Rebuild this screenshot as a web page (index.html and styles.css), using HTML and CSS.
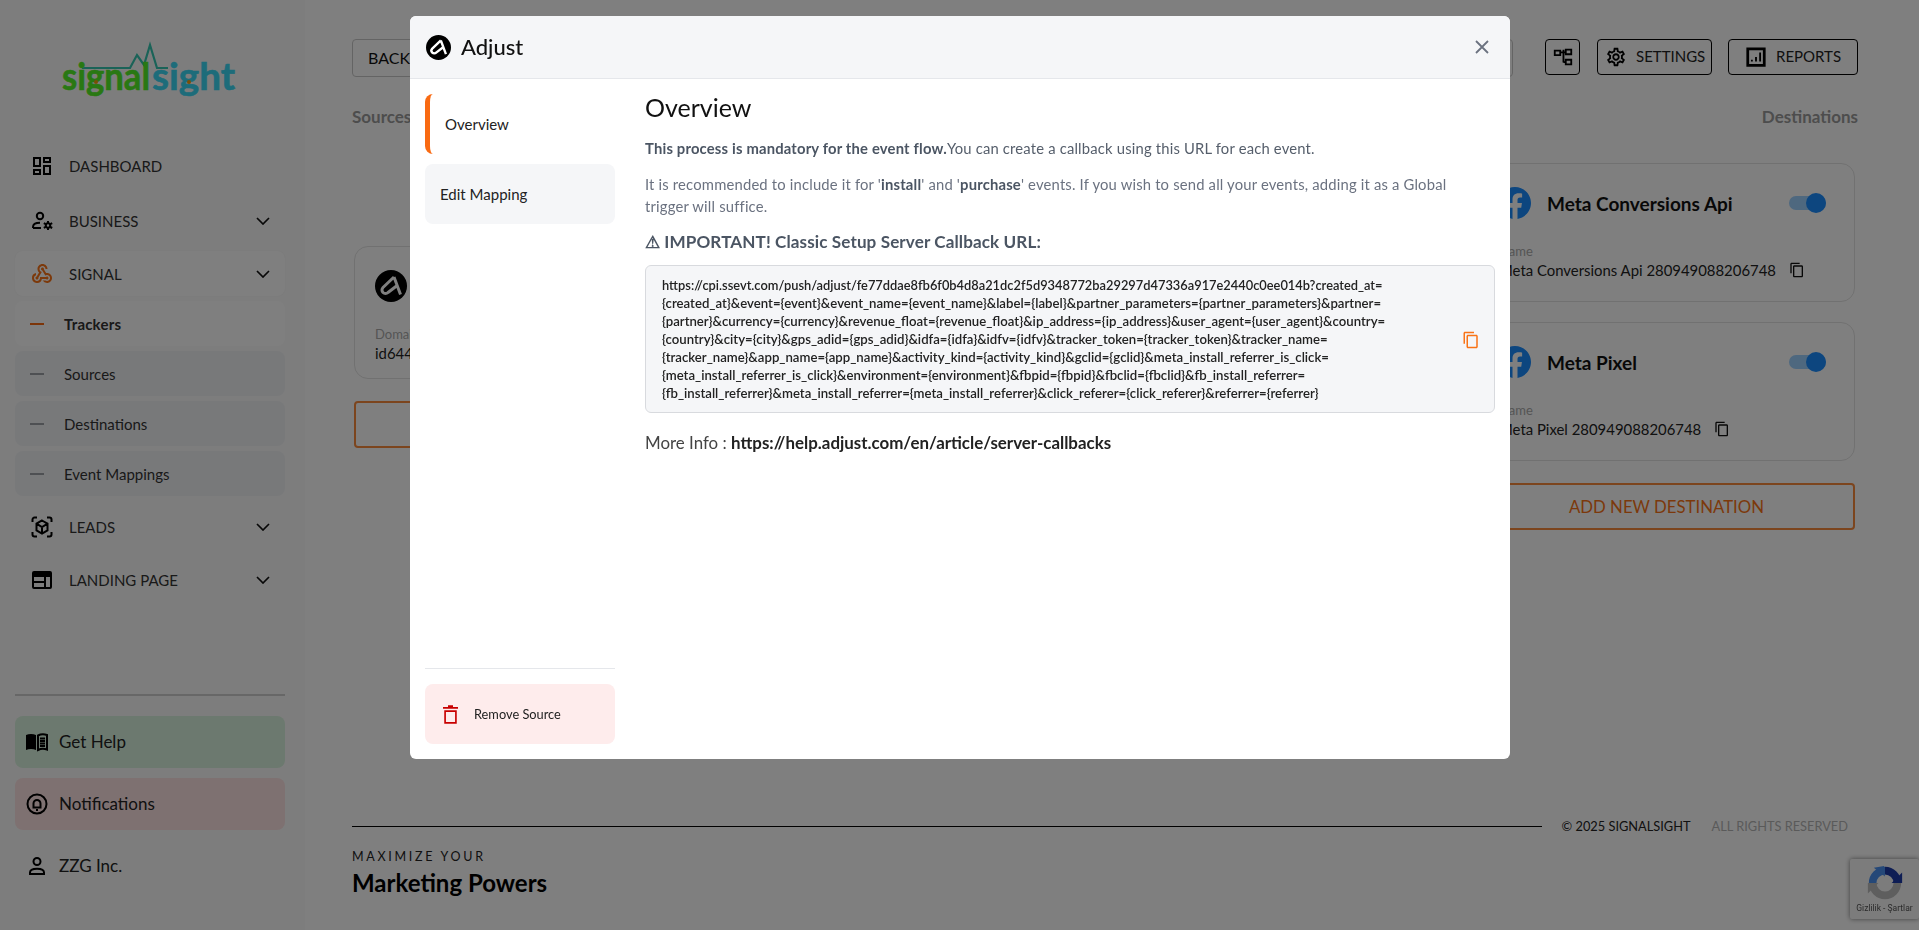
FILE: index.html
```html
<!DOCTYPE html>
<html lang="en">
<head>
<meta charset="utf-8">
<title>Adjust</title>
<link rel="stylesheet" href="styles.css">
</head>
<body>
<div class="app">
  <aside class="sidebar">
    <svg class="logo" viewBox="0 0 173 54" width="173" height="54">
      <path class="logo-pulse" d="M20 24H68L75 11L82 21L88 1L95 24H106"/>
      <text class="logo-a" x="0" y="46" textLength="88" lengthAdjust="spacingAndGlyphs">signal</text>
      <text class="logo-b" x="90" y="46" textLength="83" lengthAdjust="spacingAndGlyphs">sight</text>
      <circle class="logo-dot" cx="34" cy="38" r="2"/>
      <circle class="logo-dot" cx="127" cy="38" r="2"/>
    </svg>
    <nav class="nav">
      <a class="nav-item nav-first"><svg class="ic" viewBox="0 0 24 24"><path d="M19 5v2h-4V5h4M9 5v6H5V5h4m10 8v6h-4v-6h4M9 17v2H5v-2h4M21 3h-8v6h8V3zM11 3H3v10h8V3zm10 8h-8v10h8V11zm-10 4H3v6h8v-6z"/></svg><span>DASHBOARD</span></a>
      <a class="nav-item"><svg class="ic" viewBox="0 0 24 24"><circle class="st" cx="10" cy="7" r="3.2"/><path class="st" d="M3 19v-1c0-2.600 3-4.200 7-4.200M3 19h8"/><circle class="st" cx="18" cy="16.500" r="2.200"/><path class="st" d="M18 12v2M18 19v2M13.800 14.200l1.900 1M20.300 18l1.900 1M13.800 18.800l1.900-1M20.300 15.200l1.900-1"/></svg><span>BUSINESS</span><svg class="chev" viewBox="0 0 14 8"><path d="M1 1l6 6 6-6"/></svg></a>
      <a class="nav-item nav-active"><svg class="ic ic-orange" viewBox="0 0 24 24"><path d="M10 15h5.880c.27-.31.67-.5 1.120-.5.83 0 1.500.67 1.500 1.500s-.67 1.500-1.500 1.500c-.44 0-.84-.19-1.120-.5H11.900A5 5 0 1 1 6 11.100v2.070c-1.160.41-2 1.530-2 2.830 0 1.650 1.350 3 3 3s3-1.350 3-3v-1zm2.500-11c1.650 0 3 1.350 3 3h2c0-2.760-2.240-5-5-5s-5 2.240-5 5c0 1.430.6 2.710 1.550 3.620l-2.350 3.900c-.68.14-1.200.75-1.200 1.480 0 .83.67 1.500 1.500 1.500s1.500-.67 1.500-1.500c0-.16-.02-.31-.07-.45l3.380-5.630C10.490 9.610 9.500 8.420 9.500 7c0-1.650 1.350-3 3-3zm4.500 9c-.64 0-1.230.2-1.720.54l-3.050-5.070C11.530 8.350 11 7.740 11 7c0-.83.67-1.500 1.500-1.500S14 6.170 14 7c0 .15-.02.29-.06.43l2.190 3.650c.28-.05.57-.08.87-.08 2.760 0 5 2.240 5 5s-2.240 5-5 5a5 5 0 0 1-4.330-2.500h2.670c.48.32 1.050.5 1.660.5 1.650 0 3-1.350 3-3s-1.350-3-3-3z"/></svg><span>SIGNAL</span><svg class="chev" viewBox="0 0 14 8"><path d="M1 1l6 6 6-6"/></svg></a>
      <div class="sub-list">
        <a class="sub-item sub-active"><i class="dash"></i><span>Trackers</span></a>
        <a class="sub-item"><i class="dash"></i><span>Sources</span></a>
        <a class="sub-item"><i class="dash"></i><span>Destinations</span></a>
        <a class="sub-item"><i class="dash"></i><span>Event Mappings</span></a>
      </div>
      <a class="nav-item"><svg class="ic" viewBox="0 0 24 24"><path class="st" d="M7 2.500H4.500a2 2 0 0 0-2 2V7M17 2.500h2.500a2 2 0 0 1 2 2V7M7 21.500H4.500a2 2 0 0 1-2-2V17M17 21.500h2.500a2 2 0 0 0 2-2V17M12 5.500l5.500 3.200v6.600L12 18.500l-5.500-3.200V8.700zM6.500 8.700L12 12l5.500-3.300M12 12v6.500"/></svg><span>LEADS</span><svg class="chev" viewBox="0 0 14 8"><path d="M1 1l6 6 6-6"/></svg></a>
      <a class="nav-item"><svg class="ic" viewBox="0 0 24 24"><path fill-rule="evenodd" d="M4 3h16a2 2 0 0 1 2 2v14a2 2 0 0 1-2 2H4a2 2 0 0 1-2-2V5a2 2 0 0 1 2-2zM4 9v4h10V9zM4 15v4h10v-4zM16 9v10h4V9z"/></svg><span>LANDING PAGE</span><svg class="chev" viewBox="0 0 14 8"><path d="M1 1l6 6 6-6"/></svg></a>
    </nav>
    <div class="side-foot">
      <a class="foot-item foot-help"><svg class="fic" viewBox="0 0 24 24"><path d="M1 5c3-1.500 7-1.500 10 0v15c-3-1.500-7-1.500-10 0z"/><path class="st" d="M13 5.500c3-1.500 6-1.500 9-.5v14.500c-3-1-6-1-9 .5zM15 8.500h5M15 11h5M15 13.500h5M15 16h5"/></svg><span>Get Help</span></a>
      <a class="foot-item foot-notif"><svg class="fic" viewBox="0 0 24 24"><circle class="st" cx="12" cy="12" r="9.500"/><path class="st" d="M8.500 15.500v-4a3.500 3.500 0 0 1 7 0v4zM7.500 15.500h9M11 18h2"/></svg><span>Notifications</span></a>
      <a class="foot-item"><svg class="fic" viewBox="0 0 24 24"><circle class="st" cx="12" cy="7.500" r="3.500"/><path class="st" d="M5 20v-1.500c0-2.500 3.500-3.700 7-3.700s7 1.200 7 3.700V20z"/></svg><span>ZZG Inc.</span></a>
    </div>
  </aside>

  <main class="main">
    <div class="topbar">
      <div class="backbar">BACK</div>
      <div class="actions">
        <a class="btn btn-icon"><svg class="bic" viewBox="0 0 24 24"><path class="st" d="M3 5h6v5H3zM15 4h6v5h-6zM15 15h6v5h-6zM9 7h3.500M12.500 4v14M12.500 7H15M12.500 17.500H15"/></svg></a>
        <a class="btn btn-settings"><svg class="bic bic-lg" viewBox="0 0 24 24"><path d="M19.430 12.980c.04-.32.07-.64.07-.98 0-.34-.03-.66-.07-.98l2.110-1.650c.19-.15.24-.42.12-.64l-2-3.460c-.09-.16-.26-.25-.44-.25-.06 0-.12.01-.17.03l-2.490 1c-.52-.4-1.080-.73-1.690-.98l-.38-2.650C14.460 2.180 14.250 2 14 2h-4c-.25 0-.46.18-.49.42l-.38 2.650c-.61.25-1.170.59-1.690.98l-2.490-1c-.06-.02-.12-.03-.18-.03-.17 0-.34.09-.43.25l-2 3.460c-.13.22-.07.49.12.64l2.110 1.650c-.04.32-.07.65-.07.98 0 .33.03.66.07.98l-2.110 1.650c-.19.15-.24.42-.12.64l2 3.460c.09.16.26.25.44.25.06 0 .12-.01.17-.03l2.490-1c.52.4 1.080.73 1.690.98l.38 2.650c.03.24.24.42.49.42h4c.25 0 .46-.18.49-.42l.38-2.650c.61-.25 1.170-.59 1.690-.98l2.490 1c.06.02.12.03.18.03.17 0 .34-.09.43-.25l2-3.460c.12-.22.07-.49-.12-.64l-2.110-1.650zm-1.980-1.710c.04.31.05.52.05.73 0 .21-.02.43-.05.73l-.14 1.130.89.7 1.080.84-.7 1.210-1.270-.51-1.040-.42-.9.68c-.43.32-.84.56-1.250.73l-1.060.43-.16 1.130-.2 1.350h-1.400l-.19-1.350-.16-1.130-1.060-.43c-.43-.18-.83-.41-1.230-.71l-.91-.7-1.060.43-1.270.51-.7-1.210 1.080-.84.89-.7-.14-1.130c-.03-.31-.05-.54-.05-.74s.02-.43.05-.73l.14-1.130-.89-.7-1.080-.84.7-1.210 1.270.51 1.040.42.9-.68c.43-.32.84-.56 1.250-.73l1.060-.43.16-1.130.2-1.350h1.390l.19 1.350.16 1.130 1.060.43c.43.18.83.41 1.230.71l.91.7 1.060-.43 1.270-.51.7 1.210-1.070.85-.89.7.14 1.130zM12 8c-2.210 0-4 1.790-4 4s1.790 4 4 4 4-1.790 4-4-1.790-4-4-4zm0 6c-1.100 0-2-.9-2-2s.9-2 2-2 2 .9 2 2-.9 2-2 2z"/></svg><span>SETTINGS</span></a>
        <a class="btn btn-reports"><svg class="bic bic-lg" viewBox="0 0 24 24"><path class="st st-thick" d="M3 3h18v18H3z"/><path class="st" d="M7.500 17v-2M12 17v-5M16.500 17V7"/></svg><span>REPORTS</span></a>
      </div>
    </div>
    <div class="col-labels"><span>Sources</span><span>Destinations</span></div>
    <div class="board">
      <section class="col col-src">
        <article class="card card-src">
          <div class="card-head">
            <svg class="brand" viewBox="0 0 32 32"><circle cx="16" cy="16" r="16"/><path class="adj" d="M19 7l6.500 17.500M19 7L8 17.500a3.500 3.500 0 1 0 5 5l8.500-6.500"/></svg>
            <strong>Adjust</strong>
          </div>
          <small>Domain</small>
          <div class="val">id6448786147</div>
        </article>
        <a class="add">ADD NEW SOURCE</a>
      </section>
      <section class="col col-dst">
        <article class="card">
          <div class="card-head">
            <svg class="brand brand-fb" viewBox="0 0 24 24"><path d="M24 12.073c0-6.627-5.373-12-12-12s-12 5.373-12 12c0 5.990 4.388 10.954 10.125 11.854v-8.385H7.078v-3.470h3.047V9.430c0-3.007 1.792-4.669 4.533-4.669 1.312 0 2.686.235 2.686.235v2.953H15.830c-1.491 0-1.956.925-1.956 1.874v2.250h3.328l-.532 3.470h-2.796v8.385C19.612 23.027 24 18.062 24 12.073z"/></svg>
            <strong>Meta Conversions Api</strong>
            <i class="toggle"></i>
          </div>
          <small>Name</small>
          <div class="val"><span>Meta Conversions Api 280949088206748</span><svg class="copy" viewBox="0 0 24 24"><path d="M16 1H4c-1.100 0-2 .9-2 2v14h2V3h12V1zm3 4H8c-1.100 0-2 .9-2 2v14c0 1.100.9 2 2 2h11c1.100 0 2-.9 2-2V7c0-1.100-.9-2-2-2zm0 16H8V7h11v14z"/></svg></div>
        </article>
        <article class="card">
          <div class="card-head">
            <svg class="brand brand-fb" viewBox="0 0 24 24"><path d="M24 12.073c0-6.627-5.373-12-12-12s-12 5.373-12 12c0 5.990 4.388 10.954 10.125 11.854v-8.385H7.078v-3.470h3.047V9.430c0-3.007 1.792-4.669 4.533-4.669 1.312 0 2.686.235 2.686.235v2.953H15.830c-1.491 0-1.956.925-1.956 1.874v2.250h3.328l-.532 3.470h-2.796v8.385C19.612 23.027 24 18.062 24 12.073z"/></svg>
            <strong>Meta Pixel</strong>
            <i class="toggle"></i>
          </div>
          <small>Name</small>
          <div class="val"><span>Meta Pixel 280949088206748</span><svg class="copy" viewBox="0 0 24 24"><path d="M16 1H4c-1.100 0-2 .9-2 2v14h2V3h12V1zm3 4H8c-1.100 0-2 .9-2 2v14c0 1.100.9 2 2 2h11c1.100 0 2-.9 2-2V7c0-1.100-.9-2-2-2zm0 16H8V7h11v14z"/></svg></div>
        </article>
        <a class="add">ADD NEW DESTINATION</a>
      </section>
    </div>
    <footer class="foot">
      <div class="foot-row">
        <i class="foot-line"></i>
        <span class="copyr">© 2025 SIGNALSIGHT</span>
        <span class="rights">ALL RIGHTS RESERVED</span>
      </div>
      <div class="tag">MAXIMIZE YOUR</div>
      <div class="power">Marketing Powers</div>
    </footer>
  </main>
</div>

<div class="recaptcha">
  <svg class="rc" viewBox="0 0 40 40" width="38" height="38">
    <path class="rc-a" d="M7 20A13 13 0 0 1 20 7"/>
    <path class="rc-a-h" d="M9 3l11 0-1 11z" transform="rotate(-10 14 8)"/>
    <path class="rc-b" d="M20 7A13 13 0 0 1 33 20"/>
    <path class="rc-b-h" d="M38 9v11h-11z"/>
    <path class="rc-c" d="M33 20A13 13 0 0 1 7 20"/>
    <path class="rc-c-h" d="M2 31V20h11z"/>
  </svg>
  <span>Gizlilik - Şartlar</span>
</div>

<div class="overlay">
  <div class="modal">
    <header class="modal-head">
      <svg class="brand-sm" viewBox="0 0 32 32"><circle cx="16" cy="16" r="16"/><path class="adj" d="M19 7l6.500 17.500M19 7L8 17.500a3.500 3.500 0 1 0 5 5l8.500-6.500"/></svg>
      <h1>Adjust</h1>
      <svg class="close" viewBox="0 0 14 14"><path d="M1 1l12 12M13 1L1 13"/></svg>
    </header>
    <div class="modal-body">
      <aside class="tabs">
        <a class="tab tab-on">Overview</a>
        <a class="tab">Edit Mapping</a>
        <div class="tabs-foot">
          <a class="remove"><svg class="trash" viewBox="0 0 18 22"><path d="M6 0h6v2h6v2H0V2h6zM1.500 6h15v16h-15zM3.500 8v12h11V8z" fill-rule="evenodd"/></svg><span>Remove Source</span></a>
        </div>
      </aside>
      <section class="content">
        <h2>Overview</h2>
        <p class="p1"><b>This process is mandatory for the event flow.</b>You can create a callback using this URL for each event.</p>
        <p class="p2">It is recommended to include it for '<b>install</b>' and '<b>purchase</b>' events. If you wish to send all your events, adding it as a Global<br>trigger will suffice.</p>
        <h3>⚠ IMPORTANT! Classic Setup Server Callback URL:</h3>
        <div class="codebox">
          <code><span class="code-first">https://cpi.ssevt.com/push/adjust/fe77ddae8fb6f0b4d8a21dc2f5d9348772ba29297d47336a917e2440c0ee014b?created_at=</span><br>{created_at}&amp;event={event}&amp;event_name={event_name}&amp;label={label}&amp;partner_parameters={partner_parameters}&amp;partner=<br>{partner}&amp;currency={currency}&amp;revenue_float={revenue_float}&amp;ip_address={ip_address}&amp;user_agent={user_agent}&amp;country=<br>{country}&amp;city={city}&amp;gps_adid={gps_adid}&amp;idfa={idfa}&amp;idfv={idfv}&amp;tracker_token={tracker_token}&amp;tracker_name=<br>{tracker_name}&amp;app_name={app_name}&amp;activity_kind={activity_kind}&amp;gclid={gclid}&amp;meta_install_referrer_is_click=<br>{meta_install_referrer_is_click}&amp;environment={environment}&amp;fbpid={fbpid}&amp;fbclid={fbclid}&amp;fb_install_referrer=<br>{fb_install_referrer}&amp;meta_install_referrer={meta_install_referrer}&amp;click_referer={click_referer}&amp;referrer={referrer}</code>
          <svg class="copy-o" viewBox="0 0 24 24"><path d="M16 1H4c-1.100 0-2 .9-2 2v14h2V3h12V1zm3 4H8c-1.100 0-2 .9-2 2v14c0 1.100.9 2 2 2h11c1.100 0 2-.9 2-2V7c0-1.100-.9-2-2-2zm0 16H8V7h11v14z"/></svg>
        </div>
        <p class="more">More Info : <b>https://help.adjust.com/en/article/server-callbacks</b></p>
      </section>
    </div>
  </div>
</div>
</body>
</html>
```
FILE: styles.css
```css
* { box-sizing: border-box; }
html, body { margin: 0; height: 100%; overflow: hidden; }
body { font-family: "Lato", "Noto Sans", sans-serif; color: #111; background: #fff; }
a { display: flex; align-items: center; color: inherit; text-decoration: none; }
svg { display: block; flex: none; }
.st { fill: none; stroke: #000; stroke-width: 2; }
.st-thick { stroke-width: 3; }

.app { display: flex; height: 930px; }

/* sidebar */
.sidebar { width: 305px; flex: none; display: flex; flex-direction: column; padding: 44px 20px 38px 15px; background: #fbfbfb; }
.logo { margin-left: 47px; overflow: visible; }
.logo-pulse { fill: none; stroke: #35c6b0; stroke-width: 2.2; }
.logo-a { font: 700 38px "Lato", sans-serif; fill: #52f026; stroke: #52f026; stroke-width: .6; }
.logo-b { font: 700 38px "Lato", sans-serif; fill: #3ad8f5; stroke: #3ad8f5; stroke-width: .6; }
.logo-dot { fill: #f59e0b; }
.nav { margin-top: 45px; display: flex; flex-direction: column; gap: 8px; }
.nav-item { height: 45px; padding: 0 14px 0 15px; border-radius: 8px; font-size: 15px; color: #333; }
.nav-first { margin-bottom: 2px; }
.nav-item span { margin-left: 15px; flex: 1; }
.nav-active { background: #fff; box-shadow: 0 0 2px rgba(0,0,0,.06); }
.ic { width: 24px; height: 24px; fill: #000; }
.ic-orange { fill: #f97316; }
.chev { width: 14px; height: 8px; fill: none; stroke: #111; stroke-width: 1.7; margin-right: 1px; }
.sub-list { display: flex; flex-direction: column; gap: 5px; margin: -3px 0 0; }
.sub-item { height: 45px; padding-left: 15px; border-radius: 8px; background: #f1f2f5; font-size: 15px; color: #333; }
.sub-item .dash { width: 14px; height: 2px; background: #9ca0a6; margin-right: 20px; }
.sub-active { background: #fff; font-weight: 700; letter-spacing: .2px; }
.sub-active .dash { background: #f96a12; }
.side-foot { margin-top: auto; border-top: 2px solid #cfcfcf; padding-top: 20px; display: flex; flex-direction: column; gap: 10px; }
.foot-item { height: 52px; padding-left: 10px; border-radius: 8px; font-size: 17px; color: #222; }
.foot-item span { margin: -2px 0 0 10px; }
.fic { width: 24px; height: 24px; fill: #000; }
.foot-help { background: #d8f3de; }
.foot-notif { background: #fde2e2; }

/* main */
.main { flex: 1; min-width: 0; display: flex; flex-direction: column; padding: 39px 61px 32px 47px; }
.topbar { display: flex; gap: 32px; align-items: flex-start; }
.backbar { flex: 1; height: 38px; border: 1px solid #c9c9c9; border-radius: 4px; display: flex; align-items: center; padding: 0 0 2px 15px; font-size: 16px; }
.actions { display: flex; gap: 16px; }
.btn { height: 36px; border: 1px solid #000; border-radius: 4px; font-size: 15px; color: #222; }
.btn-icon { width: 35px; justify-content: center; margin-right: 1px; }
.btn-settings { width: 115px; padding-left: 7px; }
.btn-settings span { margin: -3px 0 0 9px; }
.btn-reports { width: 130px; padding-left: 16px; }
.btn-reports span { margin: -3px 0 0 9px; }
.bic { width: 22px; height: 22px; fill: #000; }
.bic-lg { width: 22px; height: 22px; }
.col-labels { display: flex; justify-content: space-between; margin-top: 28px; height: 24px; line-height: 24px; font-size: 17px; font-weight: 700; color: #9a9a9a; }
.board { display: flex; justify-content: space-between; padding: 0 3px 0 2px; }
.col { width: 377px; display: flex; flex-direction: column; gap: 20px; }
.col-src { margin-top: 117px; }
.col-dst { margin-top: 34px; }
.card { height: 139px; border: 1px solid #e2e2e2; border-radius: 14px; padding: 23px 28px 0 20px; }
.card-src { height: 133px; }
.card-head { display: flex; align-items: center; height: 32px; }
.card-head strong { flex: 1; margin-left: 16px; font-size: 19px; font-weight: 700; }
.brand { width: 32px; height: 32px; fill: #000; }
.brand-fb { fill: #1a8cff; }
.brand-sm { width: 25px; height: 25px; fill: #000; }
.adj { fill: none; stroke: #fff; stroke-width: 3; stroke-linejoin: round; }
.toggle { position: relative; display: block; width: 37px; height: 14px; border-radius: 7px; background: #9cd0ff; }
.toggle::after { content: ""; position: absolute; right: 0; top: -3px; width: 20px; height: 20px; border-radius: 50%; background: #1a8cff; }
.card small { display: block; margin-top: 25px; height: 14px; line-height: 14px; font-size: 13px; color: #aaa; }
.val { display: flex; align-items: center; gap: 13px; margin-top: 2px; height: 20px; font-size: 14.9px; color: #222; }
.copy { width: 16px; height: 16px; fill: #111; }
.add { height: 47px; margin-top: 2px; border: 2px solid #f98b3c; border-radius: 4px; justify-content: center; font-size: 16.8px; color: #f97316; }
.foot { margin-top: auto; }
.foot-row { display: flex; align-items: center; height: 16px; font-size: 12.8px; }
.foot-line { flex: 1; height: 1px; background: #000; }
.copyr { margin-left: 20px; color: #222; }
.rights { margin-left: 21px; margin-right: 10px; color: #b5b5b5; }
.tag { margin-top: 15px; height: 16px; line-height: 16px; font-size: 12.5px; letter-spacing: 2.7px; color: #222; }
.power { margin-top: 3px; height: 30px; line-height: 30px; font-size: 24px; font-weight: 700; color: #000; }

/* recaptcha */
.recaptcha { position: fixed; left: 1850px; top: 859px; width: 69px; height: 60px; background: #f9f9f9; box-shadow: 0 0 5px rgba(0,0,0,.5); border-radius: 2px; display: flex; flex-direction: column; align-items: center; padding-top: 5px; }
.recaptcha span { font: 8.5px "Roboto", sans-serif; color: #555; white-space: nowrap; margin-top: 1px; }
.rc { fill: none; }
.rc-a { stroke: #4a90f0; stroke-width: 8; fill: none; }
.rc-b { stroke: #1c3aa9; stroke-width: 8; fill: none; }
.rc-c { stroke: #bdbdbd; stroke-width: 8; fill: none; }
.rc-a-h { fill: #4a90f0; }
.rc-b-h { fill: #1c3aa9; }
.rc-c-h { fill: #bdbdbd; }

/* modal */
.overlay { position: fixed; inset: 0; background: rgba(0,0,0,.5); padding: 16px 409px 0 410px; }
.modal { width: 1100px; height: 743px; background: #fff; border-radius: 6px; display: flex; flex-direction: column; overflow: hidden; }
.modal-head { height: 63px; flex: none; display: flex; align-items: center; padding: 0 21px 0 16px; background: #f5f6f8; border-bottom: 1px solid #e5e7eb; }
.modal-head h1 { flex: 1; margin: -2px 0 0 10px; font-size: 22px; font-weight: 500; color: #111; }
.close { width: 14px; height: 14px; fill: none; stroke: #6b7280; stroke-width: 1.8; }
.modal-body { flex: 1; min-height: 0; display: flex; gap: 30px; padding: 15px; }
.tabs { width: 190px; flex: none; display: flex; flex-direction: column; gap: 10px; }
.tab { height: 60px; padding-left: 15px; border-radius: 8px; background: #f5f6f8; font-size: 15px; color: #222; }
.tab-on { background: #fff; border-left: 5px solid #f96a12; }
.tabs-foot { margin-top: auto; border-top: 1px solid #e5e7eb; padding-top: 15px; }
.remove { height: 60px; padding-left: 18px; border-radius: 8px; background: #feecec; font-size: 12.8px; color: #222; }
.remove span { margin-left: 16px; }
.trash { width: 15px; height: 19px; fill: #c80000; }
.content { flex: 1; min-width: 0; }
.content h2 { margin: -2px 0 0; height: 30px; line-height: 30px; font-size: 25px; font-weight: 400; color: #111; }
.content p { margin: 0; font-size: 14.8px; letter-spacing: .18px; line-height: 22px; color: #6b7280; }
.content p b { color: #4b5563; font-weight: 700; }
.content .p1 { margin-top: 15px; color: #555e6b; }
.content .p2 { margin-top: 14px; }
.content h3 { margin: 13px 0 0; height: 24px; line-height: 24px; font-size: 17.1px; letter-spacing: .1px; font-weight: 700; color: #4b5563; }
.codebox { margin-top: 11px; height: 148px; padding: 10px 14px 10px 16px; background: #f5f6f8; border: 1px solid #d8dade; border-radius: 6px; display: flex; align-items: center; justify-content: space-between; }
.codebox code { font: 600 13.2px/18px "Lato", sans-serif; color: #222; white-space: nowrap; align-self: flex-start; }
.code-first { font-size: 12.85px; }
.copy-o { width: 18px; height: 18px; margin-top: 1px; fill: #f97316; }
.content .more { margin-top: 18px; height: 24px; line-height: 24px; font-size: 16.9px; letter-spacing: 0; color: #444; }
.content .more b { color: #222; }
```
